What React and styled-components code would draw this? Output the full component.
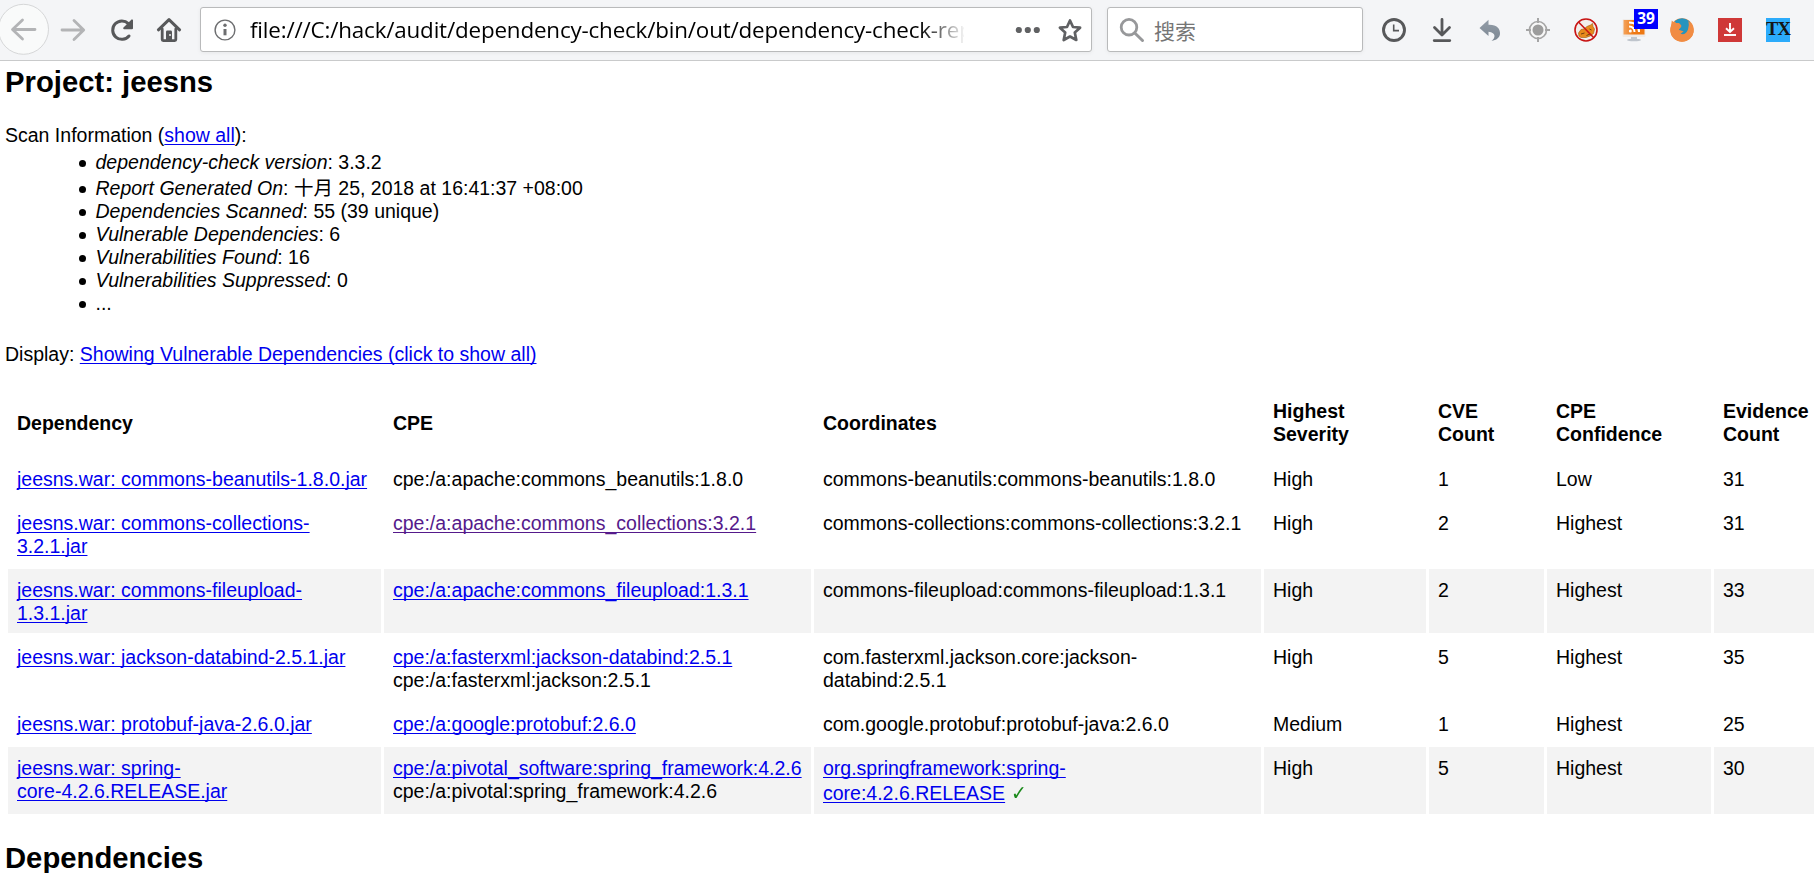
import React from "react";
import styled, { createGlobalStyle } from "styled-components";

const GlobalStyle = createGlobalStyle`
  html, body { margin: 0; background: #fff; overflow: hidden; }
  body { height: 873px; color: #000; font-family: "Liberation Sans", Arial, "Noto Sans CJK SC", sans-serif; font-size: 19.5px; line-height: 23px; }
`;

const Toolbar = styled.header`
  display: flex;
  align-items: center;
  height: 60px;
  box-sizing: content-box;
  border-bottom: 1px solid #c9cacb;
  background: #f4f5f7;
`;

const NavButton = styled.span`
  display: flex;
  flex: none;
  width: ${(p) => p.$width}px;
  height: 60px;
`;

const Field = styled.div`
  display: flex;
  align-items: center;
  flex: none;
  box-sizing: border-box;
  width: ${(p) => p.$width}px;
  height: 45px;
  margin: 0 15px 1px 0;
  border: 1px solid #b9babb;
  border-radius: 3px;
  background: #fff;
  box-shadow: 0 1px 4px rgba(0, 0, 0, 0.06);
`;

const Address = styled.span`
  width: 714px;
  margin-left: 13px;
  white-space: nowrap;
  font: 22.4px/34px "Open Sans", "Noto Sans", sans-serif;
  letter-spacing: -0.17px;
  mask-image: linear-gradient(to right, #000 670px, transparent 716px);
`;

const Placeholder = styled.span`
  margin-left: 9px;
  color: #757575;
  font: 21px/30px "Noto Sans CJK SC", sans-serif;
`;

const Actions = styled.div`
  display: flex;
  align-items: center;
  gap: 24px;
  margin-left: 4px;
`;

const Action = styled.span`
  position: relative;
  display: flex;
  width: 24px;
  height: 24px;
`;

const Badge = styled.span`
  position: absolute;
  left: 12px;
  top: -9px;
  width: 24px;
  height: 20px;
  background: #0000fe;
  color: #fff;
  text-align: center;
  font: bold 15.5px/19px "Open Sans", sans-serif;
`;

const TextLogo = styled.span`
  display: flex;
  justify-content: center;
  width: 24px;
  height: 24px;
  background: #2babfb;
  color: #151515;
  font: bold 18.5px/23px "Liberation Serif", serif;
  letter-spacing: -0.8px;
`;

const Page = styled.main`
  width: 1809px;
  padding: 4px 0 0 5px;
`;

const Heading = styled.h2`
  margin: 0;
  font-size: 29.25px;
  line-height: 34px;
`;

const Intro = styled.div`
  margin-top: 25px;
`;

const InfoList = styled.ul`
  margin: 4px 0 28px;
  padding: 0 0 0 90.5px;
  list-style: none;
`;

const InfoItem = styled.li`
  display: flex;
  align-items: center;
  height: 23px;
  padding-top: ${(p) => (p.$tall ? 3 : 0)}px;
  white-space: pre;
  &::before {
    content: "";
    flex: none;
    width: 7px;
    height: 7px;
    margin: 2px 10px 0 -17px;
    border-radius: 50%;
    background: #000;
  }
`;

const Link = styled.a`
  color: ${(p) => (p.$visited ? "#551a8b" : "#0000ee")};
  text-decoration: underline 1px;
  text-underline-offset: 2px;
  text-decoration-skip-ink: none;
`;

const Table = styled.table`
  width: 1832px;
  margin: 22px 0 24px;
  table-layout: fixed;
  border-collapse: separate;
  border-spacing: 3px;
`;

const Col = styled.col`
  width: ${(p) => p.$width}px;
`;

const HeadCell = styled.th`
  padding: 9px;
  text-align: left;
  vertical-align: middle;
  white-space: pre-line;
`;

const Cell = styled.td`
  padding: 10px 9px 8px;
  vertical-align: top;
  white-space: nowrap;
  background: ${(p) => (p.$shaded ? "#f3f3f3" : "#fff")};
`;

const Line = styled.div`
  height: 23px;
  padding-top: ${(p) => (p.$tall ? 2 : 0)}px;
  padding-bottom: ${(p) => (p.$tall ? 1 : 0)}px;
`;

const Tick = styled.span`
  display: inline-block;
  color: #1c8a1c;
  font-family: "DejaVu Sans", sans-serif;
  font-size: 20.5px;
  line-height: 20px;
  transform: scaleX(0.92);
  transform-origin: left;
`;

const info = [
  ["dependency-check version", "3.3.2"],
  ["Report Generated On", "十月 25, 2018 at 16:41:37 +08:00"],
  ["Dependencies Scanned", "55 (39 unique)"],
  ["Vulnerable Dependencies", "6"],
  ["Vulnerabilities Found", "16"],
  ["Vulnerabilities Suppressed", "0"],
];

const columns = [
  ["Dependency", 373],
  ["CPE", 427],
  ["Coordinates", 447],
  ["Highest\nSeverity", 162],
  ["CVE\nCount", 115],
  ["CPE\nConfidence", 164],
  ["Evidence\nCount", 120],
];

const link = (text, extra = {}) => ({ text, link: true, ...extra });
const plain = (text) => ({ text });

const rows = [
  { dep: [link("jeesns.war: commons-beanutils-1.8.0.jar")], cpe: [plain("cpe:/a:apache:commons_beanutils:1.8.0")], gav: [plain("commons-beanutils:commons-beanutils:1.8.0")], rest: ["High", "1", "Low", "31"] },
  { dep: [link("jeesns.war: commons-collections-"), link("3.2.1.jar")], cpe: [link("cpe:/a:apache:commons_collections:3.2.1", { visited: true })], gav: [plain("commons-collections:commons-collections:3.2.1")], rest: ["High", "2", "Highest", "31"] },
  { shaded: true, dep: [link("jeesns.war: commons-fileupload-"), link("1.3.1.jar")], cpe: [link("cpe:/a:apache:commons_fileupload:1.3.1")], gav: [plain("commons-fileupload:commons-fileupload:1.3.1")], rest: ["High", "2", "Highest", "33"] },
  { dep: [link("jeesns.war: jackson-databind-2.5.1.jar")], cpe: [link("cpe:/a:fasterxml:jackson-databind:2.5.1"), plain("cpe:/a:fasterxml:jackson:2.5.1")], gav: [plain("com.fasterxml.jackson.core:jackson-"), plain("databind:2.5.1")], rest: ["High", "5", "Highest", "35"] },
  { dep: [link("jeesns.war: protobuf-java-2.6.0.jar")], cpe: [link("cpe:/a:google:protobuf:2.6.0")], gav: [plain("com.google.protobuf:protobuf-java:2.6.0")], rest: ["Medium", "1", "Highest", "25"] },
  { shaded: true, dep: [link("jeesns.war: spring-"), link("core-4.2.6.RELEASE.jar")], cpe: [link("cpe:/a:pivotal_software:spring_framework:4.2.6"), plain("cpe:/a:pivotal:spring_framework:4.2.6")], gav: [link("org.springframework:spring-"), link("core:4.2.6.RELEASE", { tick: true })], rest: ["High", "5", "Highest", "30"] },
];

const Lines = ({ items }) =>
  items.map((it, i) => (
    <Line key={i} $tall={it.tick}>
      {it.link ? <Link $visited={it.visited}>{it.text}</Link> : it.text}
      {it.tick && <> <Tick>✓</Tick></>}
    </Line>
  ));

const stroke = (color, width) => ({ fill: "none", stroke: color, strokeWidth: width, strokeLinecap: "round", strokeLinejoin: "round" });

function Navigation() {
  return (
    <>
      <NavButton $width={55}>
        <svg width="55" height="60">
          <circle cx="23.5" cy="29.3" r="25" fill="#f9fafa" stroke="#d6d7d8" />
          <path d="M35 29.5H13M22.5 20L12.5 29.5L22.5 39" {...stroke("#b3b4b6", 2.8)} />
        </svg>
      </NavButton>
      <NavButton $width={48}>
        <svg width="48" height="60"><path d="M7 30H28M19 20.5L28.7 30L19 39.5" {...stroke("#b3b4b6", 2.8)} /></svg>
      </NavButton>
      <NavButton $width={50}>
        <svg width="50" height="60">
          <path d="M26 36A9.2 9.2 0 1 1 25.4 23.6" {...stroke("#57585a", 3)} />
          <path d="M29 20.4V28.2H21.2Z" fill="#57585a" stroke="#57585a" strokeWidth="2" strokeLinejoin="round" />
        </svg>
      </NavButton>
      <NavButton $width={47}>
        <svg width="47" height="60">
          <path d="M5.4 29.8L16 19.6L26.6 29.8" {...stroke("#57585a", 3)} />
          <path d="M9.2 29V39.6Q9.2 40.6 10.2 40.6H21.8Q22.8 40.6 22.8 39.6V29" {...stroke("#57585a", 2.8)} />
          <path d="M13 40V32Q13 30.6 14.4 30.6H17.6Q19 30.6 19 32V40Z" fill="#57585a" />
          <rect x="16" y="34" width="2" height="2" fill="#c8c8c8" />
        </svg>
      </NavButton>
    </>
  );
}

function Extensions() {
  return (
    <Actions>
      <Action>
        <svg width="24" height="24"><circle cx="12" cy="12" r="10.5" {...stroke("#57585a", 2.9)} /><path d="M11.7 6.4V12.6H17" fill="none" stroke="#57585a" strokeWidth="1.6" /></svg>
      </Action>
      <Action>
        <svg width="24" height="24"><path d="M12 1.4V16M4.5 9.5L12 17L19.5 9.5M4.2 22.6H19.8" {...stroke("#57585a", 2.8)} /></svg>
      </Action>
      <Action>
        <svg width="24" height="24">
          <defs><linearGradient id="undo" x2="0" y2="1"><stop stopColor="#929ca7" /><stop offset="1" stopColor="#7d8893" /></linearGradient></defs>
          <path d="M1.5 10L10.5 1.8V6.7C18.5 6.3 22.5 10.5 22 16C21.7 19.5 18.5 22.5 13.5 22.8C17.5 20.5 18.5 14.5 10.5 13.8V18Z" fill="url(#undo)" />
        </svg>
      </Action>
      <Action>
        <svg width="24" height="24"><circle cx="12" cy="12" r="8.5" fill="#f7f7f7" stroke="#a5a5a5" strokeWidth="1.7" /><circle cx="12" cy="12" r="5.5" fill="#9c9c9c" /><path d="M12 0V5M12 19V24M0 12H5M19 12H24" stroke="#a5a5a5" strokeWidth="2" /></svg>
      </Action>
      <Action>
        <svg width="24" height="24">
          <circle cx="12" cy="12" r="11" fill="#f2efec" />
          <path d="M4.5 15L7 11.5L10 11L13 8.5L16.5 7L18.5 5.5L19 8.5L20.5 11L19.5 15.5L16 18L12 19.5L7 19.5L5 18Z" fill="#e88a1c" stroke="#a8651c" strokeWidth="0.7" />
          <path d="M7 16L10.5 15M12.5 17.5L16 16M15.5 11L17.5 12" stroke="#6d3f12" strokeWidth="1" />
          <circle cx="12" cy="12" r="11" fill="none" stroke="#c81414" strokeWidth="1.6" /><path d="M4.5 4L19.8 19.8" stroke="#c81414" strokeWidth="1.6" />
        </svg>
      </Action>
      <Action>
        <svg width="24" height="24">
          <defs><linearGradient id="screen" x2="1" y2="0"><stop stopColor="#f4a35c" /><stop offset="0.5" stopColor="#ee7812" /><stop offset="1" stopColor="#ee7812" /></linearGradient></defs>
          <rect x="0.5" y="1" width="23" height="18" rx="1" fill="#efebe8" /><rect x="1.5" y="2" width="21" height="14.5" fill="url(#screen)" />
          <circle cx="8.3" cy="13" r="1.5" fill="#fff" /><path d="M7 8.5Q12.5 8.5 12.5 14M7 4.5Q17 4.5 17 14" fill="none" stroke="#fff" strokeWidth="2" />
          <path d="M9 19H15V21.5H9Z" fill="#c2c7cd" /><ellipse cx="12" cy="22" rx="7" ry="1.3" fill="#bfc5cd" />
        </svg>
        <Badge>39</Badge>
      </Action>
      <Action>
        <svg width="24" height="24">
          <circle cx="12" cy="12" r="11.8" fill="#f18c43" />
          <path d="M4.5 3.2Q12 -2.6 19.2 3Q22 7 19.6 12Q17 18 12 17.5L9.5 15.5L13.5 13.3L8.5 12L11.5 8.5L7 6Z" fill="#2594be" />
          <path d="M1.8 2.5L4.5 5L9 5L11.5 7.5L8.2 9.3L9 12.3L13.5 13.4L10.5 15.8Q15.5 17.5 18 11.5Q19.5 7 18.4 3Q24 8 23.6 14Q21.5 23 12 23.8Q2 23 .4 13Z" fill="#f18c43" />
        </svg>
      </Action>
      <Action>
        <svg width="24" height="24"><path d="M0 0H24V24H0Z" fill="#cf3838" /><path d="M12 5V13M8 10.3L12 14L16 10.3" fill="none" stroke="#fff" strokeWidth="1.9" /><path d="M6 17H18" stroke="#fff" strokeWidth="1.9" /></svg>
      </Action>
      <Action><TextLogo>TX</TextLogo></Action>
    </Actions>
  );
}

export default function App() {
  return (
    <>
      <GlobalStyle />
      <Toolbar>
        <Navigation />
        <Field $width={892}>
          <svg width="36" height="43"><circle cx="24" cy="22" r="9.9" {...stroke("#6d6e70", 1.4)} /><circle cx="24" cy="17.3" r="1.7" fill="#6d6e70" /><path d="M24 21V27.3" {...stroke("#6d6e70", 3)} strokeLinecap="butt" /></svg>
          <Address>file:///C:/hack/audit/dependency-check/bin/out/dependency-check-rep</Address>
          <svg width="126" height="43">
            <g fill="#606163"><circle cx="54.8" cy="22" r="3.1" /><circle cx="63.8" cy="22" r="3.1" /><circle cx="72.8" cy="22" r="3.1" /></g>
            <path d="M106 12.5L109 19L116.1 19.7L110.8 24.5L112.3 32L106 28.5L99.7 32L101.2 24.5L95.9 19.7L103 19Z" {...stroke("#606163", 2.7)} />
          </svg>
        </Field>
        <Field $width={256}>
          <svg width="37" height="43"><circle cx="21" cy="19.2" r="7.8" {...stroke("#97989a", 2.8)} /><path d="M26.8 25L34.5 32.5" {...stroke("#97989a", 3)} /></svg>
          <Placeholder>搜索</Placeholder>
        </Field>
        <Extensions />
      </Toolbar>
      <Page>
        <Heading>Project: jeesns</Heading>
        <Intro>Scan Information (<Link>show all</Link>):</Intro>
        <InfoList>
          {info.map(([name, value], i) => (
            <InfoItem key={name} $tall={i === 1}><i>{name}</i>: {value}</InfoItem>
          ))}
          <InfoItem>...</InfoItem>
        </InfoList>
        <div>Display: <Link>Showing Vulnerable Dependencies (click to show all)</Link></div>
        <Table>
          <colgroup>{columns.map(([name, w]) => <Col key={name} $width={w} />)}</colgroup>
          <thead><tr>{columns.map(([name]) => <HeadCell key={name}>{name}</HeadCell>)}</tr></thead>
          <tbody>
            {rows.map((r, i) => (
              <tr key={i}>
                <Cell $shaded={r.shaded}><Lines items={r.dep} /></Cell>
                <Cell $shaded={r.shaded}><Lines items={r.cpe} /></Cell>
                <Cell $shaded={r.shaded}><Lines items={r.gav} /></Cell>
                {r.rest.map((v, j) => <Cell key={j} $shaded={r.shaded}>{v}</Cell>)}
              </tr>
            ))}
          </tbody>
        </Table>
        <Heading>Dependencies</Heading>
      </Page>
    </>
  );
}
